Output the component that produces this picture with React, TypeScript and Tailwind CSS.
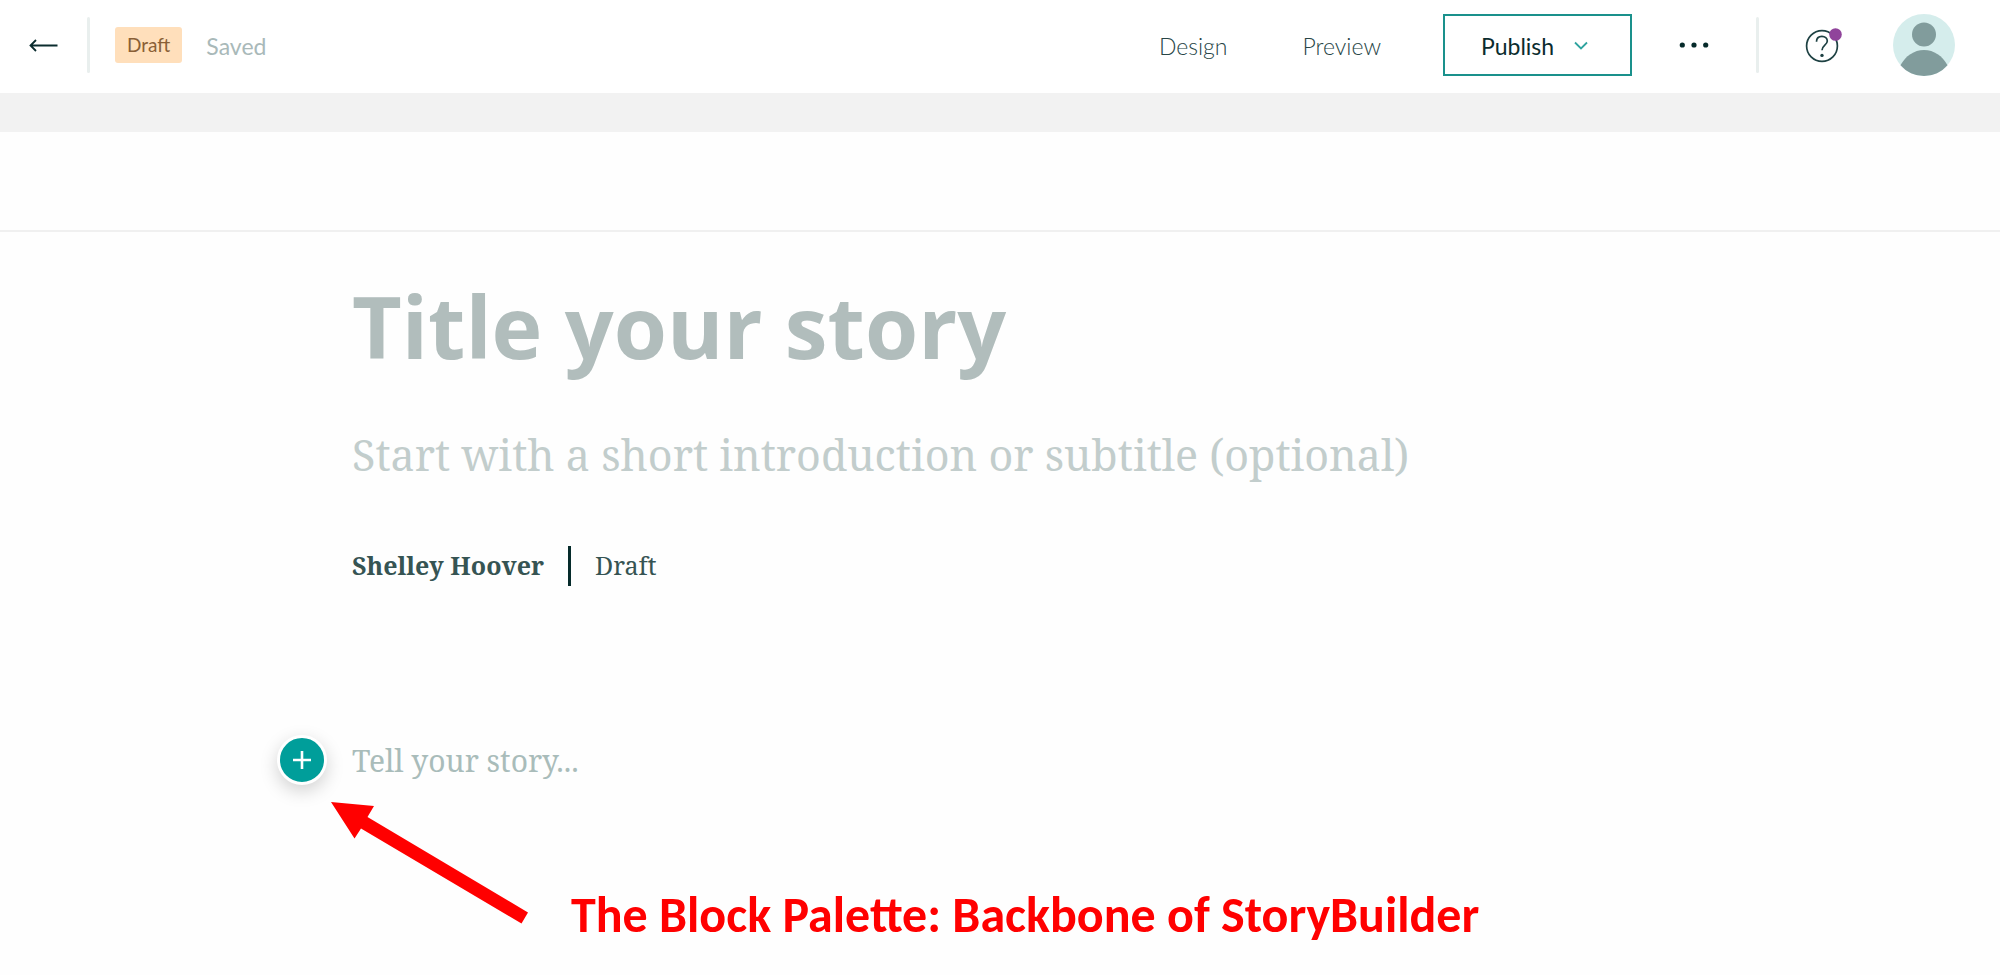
import React from "react";

const sans = "font-['Lato',sans-serif]";
const serif = "font-['Noto_Serif','DejaVu_Serif_Condensed','DejaVu_Serif',serif]";

function Divider() {
  return <div className="h-14 w-[3px] rounded-sm bg-[#e9efee]" />;
}

function Toolbar() {
  return (
    <header className="flex h-[93px] items-center justify-between bg-white pr-[45px] pb-[3px] pl-7 text-[23px] text-[#274546]">
      <div className="flex items-center">
        <a href="#stories" aria-label="Back to stories" className="mr-[29px]">
          <svg width="30" height="16" viewBox="0 0 30 16" fill="none" stroke="#0b2c2e">
            <path d="M29.500 8.500H2M8 3L2.500 8.500L8 14" strokeWidth="1.800" />
          </svg>
        </a>
        <Divider />
        <span className="ml-[25px] flex h-9 items-center rounded-[3px] bg-[#ffdfbb] px-3 text-[19px] text-[#8a5f36]">Draft</span>
        <span className="ml-6 pt-0.5 text-[#a9b9b9]">Saved</span>
      </div>
      <div className="flex items-center">
        <button type="button" className="mr-[75px] pt-0.5 font-light">Design</button>
        <button type="button" className="mr-[62px] pt-0.5 font-light">Preview</button>
        <button type="button" className="flex h-[62px] w-[189px] items-center border-2 border-[#1a918c] pt-0.5 pl-9 text-[#0b2c2e]">
          Publish
          <svg className="ml-5" width="14" height="10" viewBox="0 0 14 10" fill="none" stroke="#2fa39f" strokeWidth="1.800">
            <path d="M1 1.500L7 7.500L13 1.500" />
          </svg>
        </button>
        <button type="button" aria-label="More actions" className="mx-[47px]">
          <svg width="30" height="8" viewBox="0 0 30 8" fill="#062b2b">
            <circle cx="3.300" cy="4" r="2.600" />
            <circle cx="15" cy="4" r="2.600" />
            <circle cx="26.700" cy="4" r="2.600" />
          </svg>
        </button>
        <Divider />
        <button type="button" aria-label="Help" className="mr-[50px] ml-[46px]">
          <svg width="38" height="36" viewBox="0 0 38 36" fill="none">
            <circle cx="17" cy="19" r="15.400" stroke="#1e4143" strokeWidth="1.700" />
            <path d="M11.500 14.800C11.500 11.300 13.800 9.300 16.900 9.300C20 9.300 22.300 11.200 22.300 14C22.300 18.100 17 18.300 17 23.200" stroke="#1e4143" strokeWidth="1.700" />
            <circle cx="17" cy="28.400" r="1.700" fill="#1e4143" />
            <circle cx="30.500" cy="7.500" r="6.300" fill="#90449b" />
          </svg>
        </button>
        <button type="button" aria-label="Account">
          <svg width="62" height="62" viewBox="0 0 62 62">
            <circle cx="31" cy="31" r="31" fill="#d5edec" />
            <circle cx="31" cy="20.500" r="12" fill="#819c9c" />
            <path d="M7.500 51.200C12.500 42 21 36 31 36S49.500 42 54.500 51.200A31 31 0 0 1 7.500 51.200Z" fill="#819c9c" />
          </svg>
        </button>
      </div>
    </header>
  );
}

export default function App() {
  return (
    <div className={`${sans} min-h-screen bg-[#fefefe]`}>
      <Toolbar />
      <div className="h-[39px] bg-[#f2f2f2]" />
      <div className="h-[100px] border-b-2 border-[#f0f0f0]" />
      <main className="mx-auto max-w-[1296px] pt-[33px]">
        <input
          aria-label="Story title"
          placeholder="Title your story"
          className="block h-[120px] w-full bg-transparent font-['Open_Sans',sans-serif] text-[86px] font-bold outline-none placeholder:text-[#b1bdbc]"
        />
        <input
          aria-label="Story subtitle"
          placeholder="Start with a short introduction or subtitle (optional)"
          className={`${serif} mt-[29px] block h-20 w-full bg-transparent text-[43px] outline-none placeholder:text-[#c2cdcc]`}
        />
        <div className={`${serif} mt-[52px] flex h-10 items-center gap-6 text-[25px] text-[#365453]`}>
          <span className="font-bold">Shelley Hoover</span>
          <div className="h-full w-[3px] bg-[#062b2b]" />
          <span>Draft</span>
        </div>
        <div className="mt-[149px] -ml-[75px] flex items-center gap-[25px]">
          <button
            type="button"
            aria-label="Add content block"
            className="flex size-[50px] items-center justify-center rounded-full border-[3px] border-white bg-[#009e9a] shadow-[0_6px_18px_rgba(0,0,0,0.18)]"
          >
            <svg width="18" height="18" viewBox="0 0 18 18" stroke="white" strokeWidth="2.600">
              <path d="M9 0V18M0 9H18" />
            </svg>
          </button>
          <input
            aria-label="Story text"
            placeholder="Tell your story..."
            className={`${serif} h-12 min-w-0 flex-1 bg-transparent text-[30px] outline-none placeholder:text-[#a9bcba]`}
          />
        </div>
        <div className="mt-[17px] -ml-[21px] flex items-start gap-[42px]">
          <svg className="shrink-0" width="198" height="122" viewBox="0 0 198 122" fill="#ff0000">
            <path d="M0 0L43 4L36.500 15L197 110.500L190.500 121.500L30 26.500L23.500 36.500Z" />
          </svg>
          <p className="pt-[88px] font-['Carlito','Lato',sans-serif] text-[50px] leading-[50px] font-bold text-[#ff0000]">The Block Palette: Backbone of StoryBuilder</p>
        </div>
      </main>
    </div>
  );
}
